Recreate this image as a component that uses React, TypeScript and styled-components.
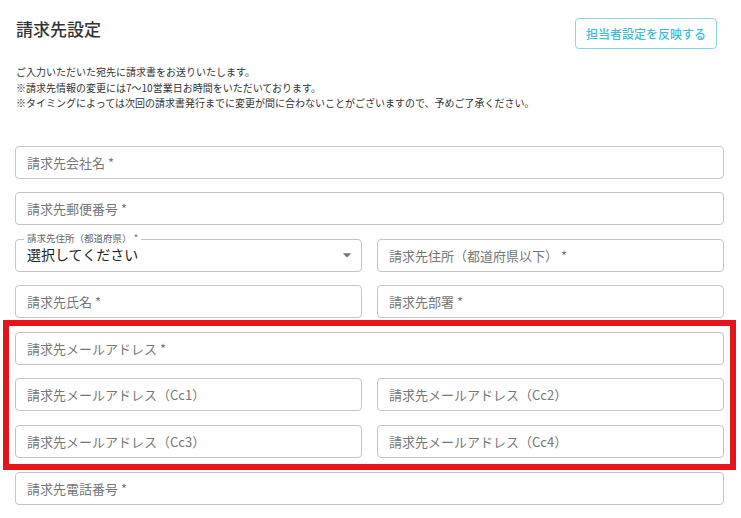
import React from "react";
import styled, { createGlobalStyle } from "styled-components";

const GlobalStyle = createGlobalStyle`
  body {
    margin: 0;
    background: #ffffff;
    font-family: "Noto Sans CJK JP", "Noto Sans", sans-serif;
    color: #333333;
  }
`;

const notes = [
  "ご入力いただいた宛先に請求書をお送りいたします。",
  "※請求先情報の変更には7〜10営業日お時間をいただいております。",
  "※タイミングによっては次回の請求書発行までに変更が間に合わないことがございますので、予めご了承ください。",
];

const App = () => {
  return (
    <>
      <GlobalStyle />
      <Page>
        <Header>
          <Title>請求先設定</Title>
          <ReflectButton>担当者設定を反映する</ReflectButton>
        </Header>
        <Notes>
          {notes.map((n) => (
            <p key={n}>{n}</p>
          ))}
        </Notes>
        <Form>
          <Field>
            <Placeholder>請求先会社名 *</Placeholder>
          </Field>
          <Field>
            <Placeholder>請求先郵便番号 *</Placeholder>
          </Field>
          <Row>
            <SelectBox>
              <FloatLabel>請求先住所（都道府県） *</FloatLabel>
              <SelectValue>選択してください</SelectValue>
              <svg width="20" height="20" viewBox="0 0 24 24">
                <path d="M7 10l5 5 5-5z" fill="#757575" />
              </svg>
            </SelectBox>
            <Field>
              <Placeholder>請求先住所（都道府県以下） *</Placeholder>
            </Field>
          </Row>
          <Row>
            <Field>
              <Placeholder>請求先氏名 *</Placeholder>
            </Field>
            <Field>
              <Placeholder>請求先部署 *</Placeholder>
            </Field>
          </Row>
          <Highlight>
            <Field>
              <Placeholder>請求先メールアドレス *</Placeholder>
            </Field>
            <Row>
              <Field>
                <Placeholder>請求先メールアドレス（Cc1）</Placeholder>
              </Field>
              <Field>
                <Placeholder>請求先メールアドレス（Cc2）</Placeholder>
              </Field>
            </Row>
            <Row>
              <Field>
                <Placeholder>請求先メールアドレス（Cc3）</Placeholder>
              </Field>
              <Field>
                <Placeholder>請求先メールアドレス（Cc4）</Placeholder>
              </Field>
            </Row>
          </Highlight>
          <Field>
            <Placeholder>請求先電話番号 *</Placeholder>
          </Field>
        </Form>
      </Page>
    </>
  );
};

const Page = styled.div`
  padding: 18px 17px 0 15px;
`;

const Header = styled.div`
  display: flex;
  justify-content: space-between;
  align-items: flex-start;
  padding-right: 7px;
`;

const Title = styled.h2`
  margin: 0;
  font-size: 17px;
  font-weight: 500;
  line-height: 22px;
  color: #333333;
  padding-left: 1px;
`;

const ReflectButton = styled.button`
  box-sizing: border-box;
  width: 142px;
  height: 31px;
  padding: 0;
  border: 1px solid #86d8e9;
  border-radius: 4px;
  background: #ffffff;
  color: #3fbcd6;
  font-family: "Noto Sans CJK JP", "Noto Sans", sans-serif;
  font-size: 12px;
  font-weight: 500;
  text-align: center;
`;

const Notes = styled.div`
  margin-top: 15px;
  padding-left: 1px;
  p {
    margin: 0;
    font-size: 10px;
    line-height: 15.5px;
    color: #333333;
  }
`;

const Form = styled.div`
  margin-top: 35px;
  display: flex;
  flex-direction: column;
  gap: 13.6px;
`;

const Row = styled.div`
  display: grid;
  grid-template-columns: 1fr 1fr;
  column-gap: 15px;
`;

const Highlight = styled.div`
  display: flex;
  flex-direction: column;
  gap: 13.6px;
  outline: 6px solid #e8141c;
  outline-offset: 6px;
`;

const Field = styled.div`
  box-sizing: border-box;
  height: 33px;
  border: 1px solid #c4c4c4;
  border-radius: 4px;
  display: flex;
  align-items: center;
  padding-left: 11px;
`;

const Placeholder = styled.span`
  font-size: 13px;
  color: #777777;
`;

const SelectBox = styled(Field)`
  position: relative;
  justify-content: space-between;
  padding-right: 4px;
`;

const FloatLabel = styled.span`
  position: absolute;
  top: -8px;
  left: 8px;
  padding: 0 3px;
  background: #ffffff;
  font-size: 9.5px;
  line-height: 13px;
  color: #666666;
`;

const SelectValue = styled.span`
  font-size: 14px;
  color: #222222;
  margin-top: -2px;
`;

export default App;
